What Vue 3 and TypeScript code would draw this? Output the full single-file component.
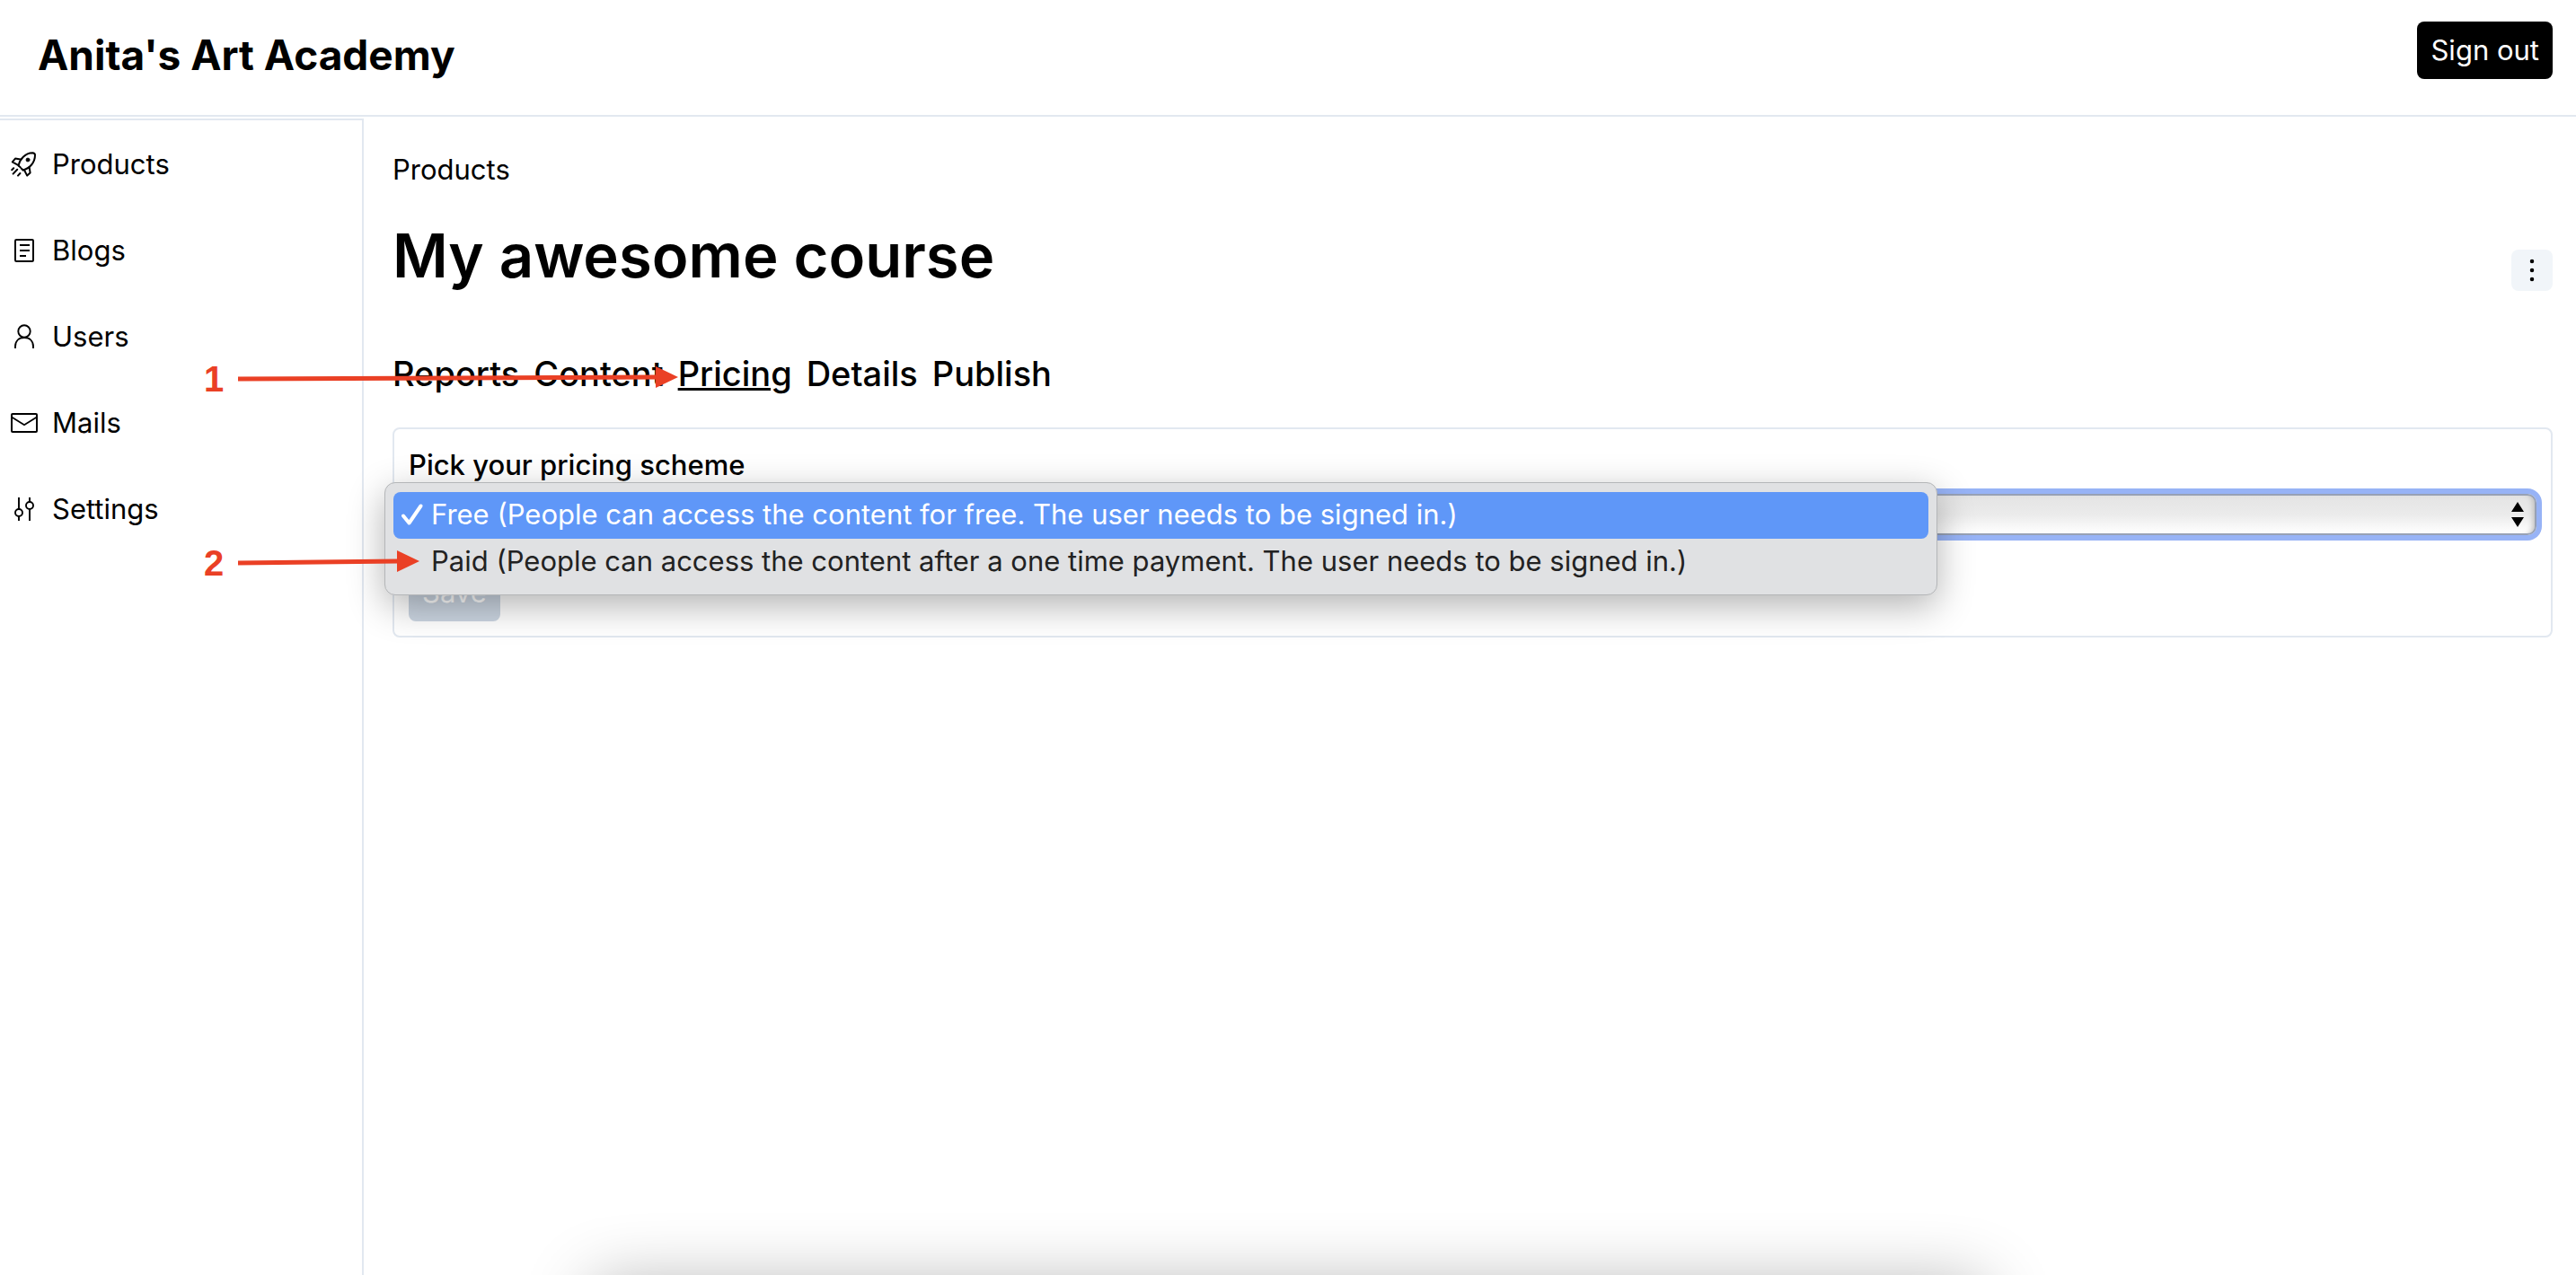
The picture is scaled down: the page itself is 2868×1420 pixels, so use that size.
<script setup lang="ts">
import { ref } from 'vue'

interface NavItem {
  label: string
  icon: 'rocket' | 'reader' | 'person' | 'mail' | 'mixer'
}

const navItems: NavItem[] = [
  { label: 'Products', icon: 'rocket' },
  { label: 'Blogs', icon: 'reader' },
  { label: 'Users', icon: 'person' },
  { label: 'Mails', icon: 'mail' },
  { label: 'Settings', icon: 'mixer' },
]

const tabs: string[] = ['Reports', 'Content', 'Pricing', 'Details', 'Publish']
const activeTab = ref('Pricing')

const schemes = [
  { value: 'free', label: 'Free (People can access the content for free. The user needs to be signed in.)' },
  { value: 'paid', label: 'Paid (People can access the content after a one time payment. The user needs to be signed in.)' },
]
const scheme = ref('free')
</script>

<template>
  <div class="page">
    <header class="topbar">
      <a class="brand" href="#">Anita's Art Academy</a>
      <button class="btn btn-dark" type="button">Sign out</button>
    </header>

    <div class="body">
      <nav class="sidebar" aria-label="Dashboard">
        <a v-for="item in navItems" :key="item.label" class="nav-link" href="#">
          <svg class="icon" viewBox="0 0 15 15" fill="none" stroke="currentColor" aria-hidden="true">
            <g v-if="item.icon === 'rocket'" stroke-linejoin="round" stroke-linecap="round">
              <path d="M4.3 8.2C5 4.6 8 1.2 12.1 1.1c.9 0 1.4.4 1.4 1.3 0 4.100-3 7.400-6.700 8.300" />
              <path d="M4.300 8.200l1 .9M5.800 9.700l1.100 1" />
              <path d="M5.400 4.800 2.500 4.300.9 6.200l2.700 1.500" />
              <path d="M10.300 9.100l.5 3.100-1.700 1.600-1.500-2.900" />
              <path d="M.6 10.600l1-1M1.300 12.800l2.300-2.400M4 13.800l1.200-1.300" />
              <circle cx="9.500" cy="5" r="1" fill="currentColor" stroke-width="0.4" />
            </g>
            <g v-else-if="item.icon === 'reader'">
              <rect x="2.500" y="1.500" width="10" height="12" rx="0.600" />
              <path d="M5 4.500h5.500M5 7.500h5.500M5 10.500h3.500" />
            </g>
            <g v-else-if="item.icon === 'person'" stroke-width="0.950">
              <circle cx="7.500" cy="4.500" r="3.350" />
              <path d="M2.500 14v-1C2.500 9.800 4.600 8 7.500 8s5 1.800 5 5v1" />
            </g>
            <g v-else-if="item.icon === 'mail'">
              <rect x="0.500" y="2.500" width="14" height="10" rx="0.500" />
              <path d="M.7 4.400l6.800 4.200 6.800-4.200" stroke-width="0.900" />
            </g>
            <g v-else stroke-width="0.950">
              <path d="M4.500 1v6.600M4.500 11.500V14M10.500 1v2.500M10.500 7.400V14" />
              <circle cx="4.500" cy="9.500" r="2" />
              <circle cx="10.500" cy="5.500" r="2" />
            </g>
          </svg>
          <span>{{ item.label }}</span>
        </a>
      </nav>

      <main class="content">
        <a class="crumb" href="#">Products</a>

        <div class="title-row">
          <h1>My awesome course</h1>
          <button class="more" type="button" aria-label="More actions">
            <svg class="icon" viewBox="0 0 15 15" fill="currentColor" aria-hidden="true">
              <circle cx="7.500" cy="2.500" r="1.125" />
              <circle cx="7.500" cy="7.500" r="1.125" />
              <circle cx="7.500" cy="12.500" r="1.125" />
            </svg>
          </button>
        </div>

        <nav class="tabs" aria-label="Course sections">
          <a
            v-for="tab in tabs"
            :key="tab"
            href="#"
            :class="{ active: tab === activeTab }"
            @click.prevent="activeTab = tab"
          >{{ tab }}</a>
        </nav>

        <form class="card" @submit.prevent>
          <label for="scheme">Pick your pricing scheme</label>
          <div class="select-wrap">
            <select id="scheme" v-model="scheme">
              <option v-for="s in schemes" :key="s.value" :value="s.value">{{ s.label }}</option>
            </select>
            <svg class="arrows" viewBox="0 0 14 28" fill="currentColor" aria-hidden="true">
              <path d="M7 0l7 11H0zM7 28l7-11H0z" />
            </svg>
            <ul class="menu" role="listbox" aria-label="Pricing scheme">
              <li
                v-for="s in schemes"
                :key="s.value"
                role="option"
                :aria-selected="s.value === scheme"
                :class="{ selected: s.value === scheme }"
                @click="scheme = s.value"
              >
                <svg class="check" viewBox="0 0 24 24" fill="none" stroke="currentColor" aria-hidden="true">
                  <path
                    v-if="s.value === scheme"
                    d="M2 13.500l6.500 8L21.500 2.500"
                    stroke-width="4"
                    stroke-linecap="round"
                    stroke-linejoin="round"
                  />
                </svg>
                <span>{{ s.label }}</span>
              </li>
            </ul>
          </div>
          <button class="btn btn-muted" type="submit" disabled>Save</button>
        </form>
      </main>
    </div>

    <div class="callout callout-one">
      <span>1</span>
      <svg width="490" height="24" viewBox="0 0 490 24" aria-hidden="true">
        <path d="M0 14L466 12" stroke="currentColor" stroke-width="5" />
        <path d="M465 0l25 12-25 12z" fill="currentColor" />
      </svg>
    </div>
    <div class="callout callout-two">
      <span>2</span>
      <svg width="202" height="24" viewBox="0 0 202 24" aria-hidden="true">
        <path d="M0 14L178 12" stroke="currentColor" stroke-width="5" />
        <path d="M177 0l25 12-25 12z" fill="currentColor" />
      </svg>
    </div>
    <div class="dock-shadow" aria-hidden="true"></div>
  </div>
</template>

<style>
body {
  margin: 0;
  background: #fff;
}
</style>

<style scoped>
.page {
  position: relative;
  display: flex;
  flex-direction: column;
  min-height: 100vh;
  color: #000;
  font-family: Inter, "Liberation Sans", sans-serif;
  font-size: 31px;
  line-height: 48px;
}
.page *,
.page {
  box-sizing: border-box;
}
a {
  color: inherit;
  text-decoration: none;
}
button,
select {
  font: inherit;
}
.icon {
  display: block;
  flex: none;
  width: 30px;
  height: 30px;
}

.topbar {
  display: flex;
  justify-content: space-between;
  align-items: flex-start;
  height: 130px;
  padding: 24px 26px 0 42px;
  border-bottom: 2px solid #e2e8f0;
}
.brand {
  font-size: 46px;
  font-weight: 700;
  line-height: 74px;
}
.btn {
  display: block;
  height: 64px;
  padding: 8px 15px;
  border: 0;
  border-radius: 8px;
}
.btn-dark {
  background: #000;
  color: #fff;
}
.btn-muted {
  background: #cbd5e1;
  color: #fff;
}

.body {
  display: flex;
  flex: 1;
  margin-top: 2px;
}
.sidebar {
  flex: none;
  width: 405px;
  border-top: 2px solid #e2e8f0;
  border-right: 2px solid #e2e8f0;
}
.nav-link {
  display: flex;
  align-items: center;
  gap: 16px;
  padding: 25px 12px 23px;
}
.content {
  flex: 1;
  min-width: 0;
  padding: 33px 26px 32px 32px;
}
.crumb {
  display: block;
}
.title-row {
  display: flex;
  justify-content: space-between;
  align-items: flex-end;
  margin: 33px 0 64px;
}
h1 {
  margin: 0;
  font-size: 67px;
  font-weight: 600;
  line-height: 78px;
}
.more {
  padding: 8px;
  border: 0;
  border-radius: 8px;
  background: #f1f5f9;
  color: #000;
}
.tabs {
  display: flex;
  gap: 16px;
  margin-bottom: 32px;
  font-size: 38px;
  font-weight: 500;
  line-height: 56px;
}
.tabs .active {
  text-decoration: underline;
  text-decoration-thickness: 3px;
}

.card {
  padding: 16px;
  border: 2px solid #e2e8f0;
  border-radius: 8px;
}
.card label {
  display: block;
  font-weight: 500;
}
.select-wrap {
  position: relative;
  margin: 8px 0 32px;
}
select {
  display: block;
  width: 100%;
  height: 46px;
  padding: 0 16px;
  appearance: none;
  border: 2px solid #97a1b5;
  border-radius: 10px;
  outline: none;
  background: linear-gradient(#e4e4e4, #ebebeb 50%, #fff);
  box-shadow: 0 0 0 6px #97b3f6, inset -6px 0 6px -4px #bbb;
  color: #000;
  line-height: 40px;
}
.arrows {
  position: absolute;
  top: 9px;
  right: 14px;
  width: 14px;
  height: 28px;
  pointer-events: none;
}
.menu {
  position: absolute;
  z-index: 1;
  top: -13px;
  left: -27px;
  width: 73%;
  margin: 0;
  padding: 10px 9px;
  list-style: none;
  border: 1px solid #b4b6b8;
  border-radius: 12px;
  background: #e0e1e3;
  box-shadow: 0 12px 40px rgba(0, 0, 0, 0.3);
  color: #222;
}
.menu li {
  display: flex;
  align-items: center;
  gap: 9px;
  height: 52px;
  padding: 0 9px 2px;
  border-radius: 8px;
}
.menu .selected {
  background: #5f97f8;
  color: #fff;
}
.check {
  flex: none;
  width: 24px;
  height: 24px;
}

.callout {
  position: absolute;
  z-index: 2;
  display: flex;
  align-items: center;
  gap: 14px;
  color: #ea4025;
  font-family: "Liberation Sans", Arial, sans-serif;
  font-size: 40px;
  font-weight: 700;
  line-height: 48px;
  pointer-events: none;
}
.callout span {
  width: 24px;
  padding-top: 4px;
}
.callout-one {
  top: 394px;
  left: 227px;
}
.callout-two {
  top: 599px;
  left: 227px;
}
.dock-shadow {
  position: fixed;
  top: calc(100% + 10px);
  right: 23%;
  left: 23%;
  height: 200px;
  box-shadow: 0 0 76px rgba(0, 0, 0, 0.3);
}
</style>
